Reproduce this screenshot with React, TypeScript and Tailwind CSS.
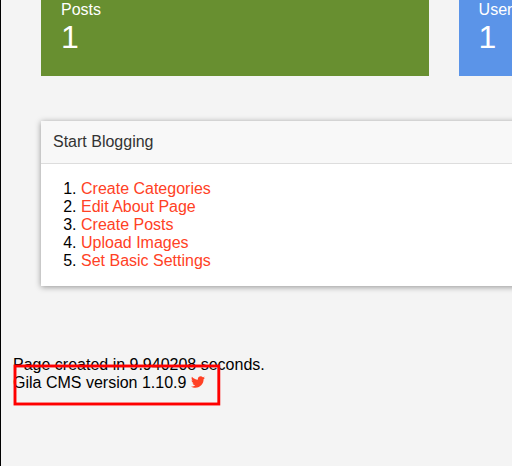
import { FaTwitter } from "react-icons/fa";

const links = ["Create Categories", "Edit About Page", "Create Posts", "Upload Images", "Set Basic Settings"];

function Stat({ label, value, color }: { label: string; value: number; color: string }) {
  return (
    <div className={`h-[76px] w-[388px] shrink-0 pt-px pl-5 text-white ${color}`}>
      <div className="text-base leading-[18px]">{label}</div>
      <div className="text-[32px] leading-[37px]">{value}</div>
    </div>
  );
}

export default function App() {
  return (
    <div className="h-[466px] w-[512px] overflow-hidden border-l border-black bg-[#f4f4f4] font-['Liberation_Sans',Arial,sans-serif] text-base leading-[18px] text-black">
      <div className="ml-10 flex gap-[29.6px]">
        <Stat label="Posts" value={1} color="bg-[#688f30]" />
        <Stat label="Users" value={1} color="bg-[#5b94e8]" />
      </div>
      <section className="mt-[45px] ml-10 h-[165px] w-[520px] bg-white shadow-[0_1px_6px_rgba(0,0,0,0.4)]">
        <h2 className="h-[43px] border-b border-[#dddddd] bg-[#f8f8f8] pt-3 pl-3 text-[#333333]">Start Blogging</h2>
        <ol className="list-decimal pt-4 pl-10">
          {links.map((link) => (
            <li key={link}>
              <a className="text-[#ff4125]">{link}</a>
            </li>
          ))}
        </ol>
      </section>
      <footer className="relative mt-[70px] ml-3">
        <p>Page created in 9.940208 seconds.</p>
        <p className="flex items-center">
          Gila CMS version 1.10.9
          <FaTwitter className="-mt-0.5 ml-[5px] size-[14px] text-[#ff4125]" />
        </p>
        <svg className="absolute top-[8px] left-0 h-[42px] w-[208px]" viewBox="0 0 208 42" fill="none">
          <rect x="2" y="2" width="203.8" height="38" stroke="#ff0000" strokeWidth="2.9" />
        </svg>
      </footer>
    </div>
  );
}
